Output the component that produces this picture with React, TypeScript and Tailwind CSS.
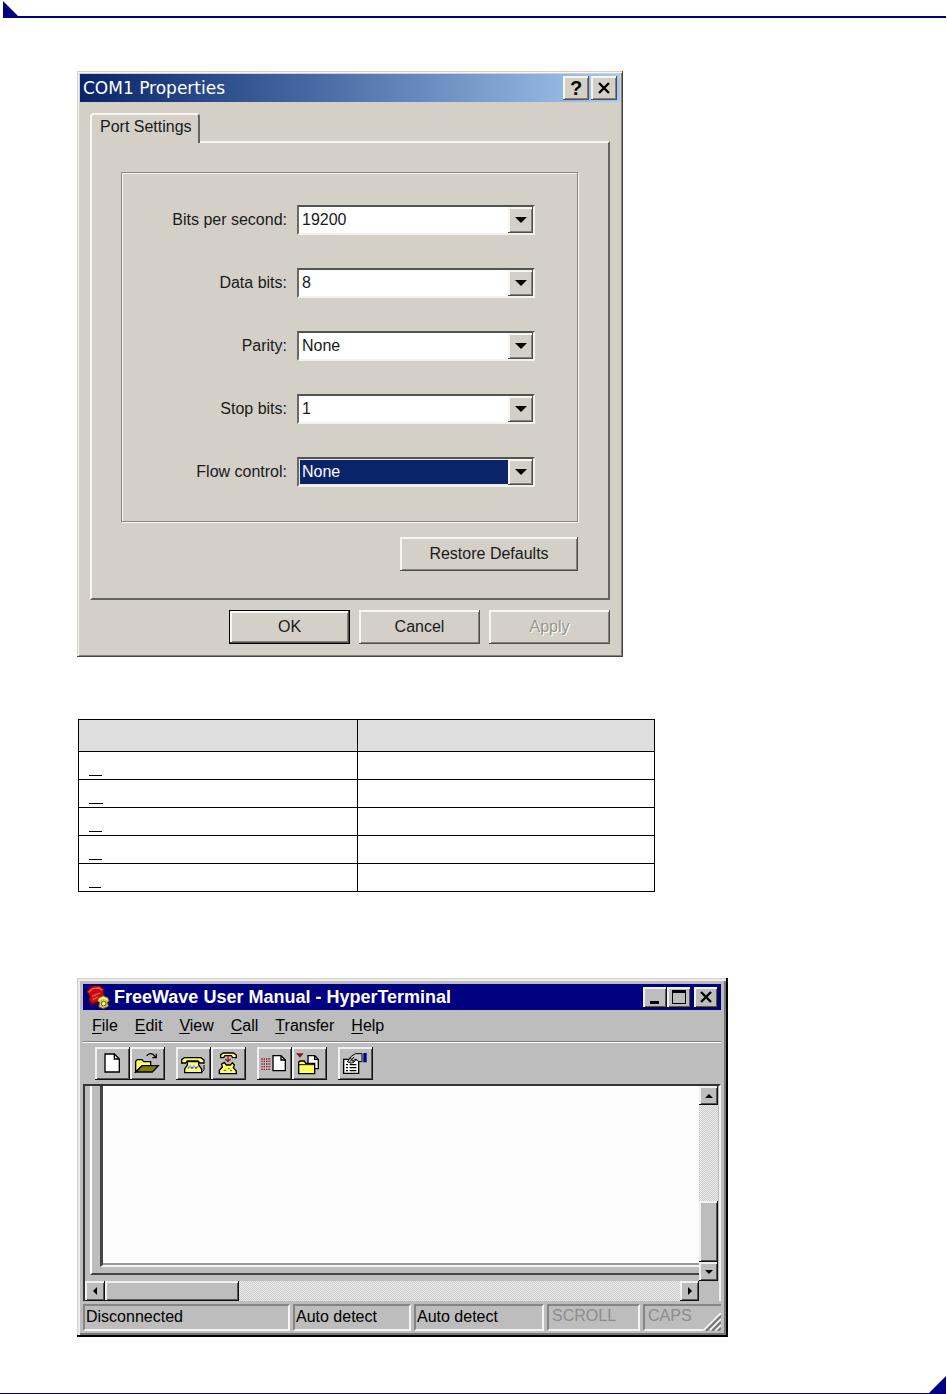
import { useState } from "react";
import type { ReactNode } from "react";
import clsx from "clsx";

const ports = [
  { id: "baud", label: "Bits per second:", value: "19200", options: ["9600", "19200", "38400", "115200"] },
  { id: "data", label: "Data bits:", value: "8", options: ["7", "8"] },
  { id: "parity", label: "Parity:", value: "None", options: ["None", "Even", "Odd"] },
  { id: "stop", label: "Stop bits:", value: "1", options: ["1", "2"] },
  { id: "flow", label: "Flow control:", value: "None", options: ["None", "Hardware", "Xon / Xoff"], active: true },
];

const blanks = ["w-[13px]", "w-[14px]", "w-[13px]", "w-[13px]", "w-3"];

const menus = ["File", "Edit", "View", "Call", "Transfer", "Help"];

// Raised edges: warm gray for the dialog, neutral gray for the terminal
const raised = "bg-[#d4d0c8] shadow-[inset_-1px_-1px_0_#504e4a,inset_2px_2px_0_#f8f6f2,inset_-2px_-2px_0_#858178]";
const raisedGray = "bg-[#bdbdbd] shadow-[inset_-1px_-1px_0_#111,inset_2px_2px_0_#f0f0f0,inset_-2px_-2px_0_#555]";
const dither = "bg-[repeating-conic-gradient(#ececec_0_25%,#cbcbcb_0_50%)] bg-[length:2px_2px]";

function Cross() {
  return (
    <svg viewBox="0 0 12 12" className="h-3 w-3" aria-hidden="true">
      <path d="M1 1 11 11M11 1 1 11" stroke="#000" strokeWidth="2.4" />
    </svg>
  );
}

function PortField({ field }: { field: (typeof ports)[number] }) {
  const [value, setValue] = useState(field.value);
  return (
    <div className="flex items-center justify-end gap-[10px]">
      <label htmlFor={field.id}>{field.label}</label>
      <div className="relative w-[238px]">
        <select
          id={field.id}
          value={value}
          onChange={(e) => setValue(e.target.value)}
          className={clsx(
            "block h-[30px] w-full appearance-none border-2 border-t-[#55534f] border-l-[#6b6963] border-r-[#f4f2ee] border-b-[#f4f2ee] pl-[3px] outline-none",
            field.active ? "bg-[#0a246a] text-white shadow-[inset_0_0_0_1px_#e8e6e0]" : "bg-white"
          )}
        >
          {field.options.map((o) => (
            <option key={o}>{o}</option>
          ))}
        </select>
        <span className={clsx("pointer-events-none absolute top-0.5 right-0.5 bottom-0.5 flex w-[25px] items-center justify-center", raised)}>
          <svg viewBox="0 0 12 6" className="h-1.5 w-3" aria-hidden="true">
            <path d="M0 0H12L6 6Z" />
          </svg>
        </span>
      </div>
    </div>
  );
}

function PropertiesDialog() {
  return (
    <section className="w-full max-w-[546px] bg-[#d4d0c8] p-[3px] pb-[13px] text-base leading-5 text-[#1a1a1a] shadow-[inset_-1px_-1px_0_#45433f,inset_1px_1px_0_#d4d0c8,inset_2px_2px_0_#f8f6f2,inset_-2px_-2px_0_#858178]">
      <header className="flex h-7 items-center bg-linear-to-r from-[#0a246a] to-[#a6caf0] pr-[3px] pl-[3px]">
        <h2 className="flex-1 font-['DejaVu_Sans',sans-serif] text-[17px] font-normal text-white">COM1 Properties</h2>
        <div className="flex gap-0.5">
          <button aria-label="Help" className={clsx("flex h-6 w-[26px] items-center justify-center text-xl font-bold text-black", raised)}>?</button>
          <button aria-label="Close" className={clsx("flex h-6 w-[26px] items-center justify-center", raised)}>
            <Cross />
          </button>
        </div>
      </header>

      <div className="px-[10px] pt-[11px]">
        <div role="tablist" className="flex">
          <button role="tab" aria-selected="true" className="-mb-0.5 h-[30px] rounded-t-sm border-t-2 border-r-2 border-l-2 border-t-[#f8f6f2] border-r-[#65635f] border-l-[#f8f6f2] bg-[#d4d0c8] pr-1.5 pb-1 pl-2">
            Port Settings
          </button>
        </div>
        <div className="border-2 border-t-[#f8f6f2] border-r-[#65635f] border-b-[#65635f] border-l-[#f8f6f2] pt-[29px] pr-[30px] pb-[27px] pl-[29px]">
          <fieldset className="flex flex-col gap-[33px] border border-[#8c8880] pt-8 pr-[42px] pb-[34px] shadow-[1px_1px_0_#f8f6f2,inset_1px_1px_0_#f8f6f2]">
            {ports.map((p) => (
              <PortField key={p.id} field={p} />
            ))}
          </fieldset>
          <div className="mt-[15px] flex justify-end">
            <button className={clsx("h-[34px] w-[178px]", raised)}>Restore Defaults</button>
          </div>
        </div>
        <div className="mt-[10px] flex justify-end gap-[9px]">
          <button className={clsx("h-[34px] w-[121px] border border-black", raised)}>OK</button>
          <button className={clsx("h-[34px] w-[121px]", raised)}>Cancel</button>
          <button disabled className={clsx("h-[34px] w-[121px] text-[#98958e] [text-shadow:1px_1px_0_#fff]", raised)}>Apply</button>
        </div>
      </div>
    </section>
  );
}

function SettingsTable() {
  return (
    <table className="mt-[62px] ml-px w-full max-w-[577px] table-fixed border-collapse">
      <thead>
        <tr className="h-8 bg-[#dedede]">
          <th className="w-[279px] border border-black p-0" />
          <th className="border border-black p-0" />
        </tr>
      </thead>
      <tbody>
        {blanks.map((width, i) => (
          <tr key={i} className="h-7">
            <td className="border border-black p-0 pl-[10px] align-top">
              <div className={clsx("h-6 border-b border-black", width)} />
            </td>
            <td className="border border-black p-0" />
          </tr>
        ))}
      </tbody>
    </table>
  );
}

function Tool({ label, children }: { label: string; children: ReactNode }) {
  return (
    <button aria-label={label} className={clsx("h-[33px] w-[35px]", raisedGray)}>
      <svg viewBox="0 0 105 99" className="block h-full w-full" stroke="#000" strokeWidth="4" fill="none">
        {children}
      </svg>
    </button>
  );
}

function Toolbar() {
  return (
    <div className="flex gap-[11px] px-3 py-1">
      <div className="flex">
        <Tool label="New">
          <path d="M30 21H58L73 36V75H30Z" fill="#fff" />
          <path d="M58 21V36H73" />
        </Tool>
        <Tool label="Open">
          <path d="M17 75V43L22 38H36L41 44H62V56H37Z" fill="#ffff66" />
          <path d="M17 75 37 56H85L67 75Z" fill="#808000" />
          <path d="M50 27Q54 20 62 20Q70 20 76 30M79 20V32H67" strokeWidth="3.5" />
        </Tool>
      </div>
      <div className="flex">
        <Tool label="Connect">
          <path d="M26 77V66L34 54V44H68V54L77 66V77Z" fill="#ffff66" />
          <path d="M17 46V38L25 32H75L84 39V48H72L66 42H34L29 48H17Z" fill="#ffff66" />
          <path d="M36 64 42 56 48 64 54 56 60 64 66 58" stroke="#4848e0" />
          <path d="M37 57H64M38 68H66" stroke="#fff" strokeWidth="3" />
          <path d="M77 76 84 69V54" strokeWidth="3" />
        </Tool>
        <Tool label="Disconnect">
          <path d="M29 31V23L37 18H67L76 24V32H65L61 26H42L38 32H29Z" fill="#ffff66" />
          <path d="M51 28V42M43 36 51 44 59 36" stroke="#9c1030" />
          <path d="M25 80V70L34 60 32 51 40 46 46 54H58L64 47 70 54 67 62 76 72V80Z" fill="#ffff66" />
          <path d="M38 70H46M50 65H56M57 71H63" stroke="#555" strokeWidth="3" />
        </Tool>
      </div>
      <div className="flex">
        <Tool label="Send">
          <path d="M13 36H42M13 43H42M13 51H42M13 59H42M13 67H42" stroke="#8c1020" strokeDasharray="4 3" />
          <path d="M48 26H72L85 39V71H48Z" fill="#fff" />
          <path d="M72 26V39H85" />
        </Tool>
        <Tool label="Receive">
          <path d="M12 19H35L24 32Z" fill="#8c1020" stroke="none" />
          <path d="M48 26H68L79 37V65H48Z" fill="#fff" />
          <path d="M68 26V37H79" />
          <path d="M20 80V46L24 42H37L41 49H68V80Z" fill="#ffff55" />
          <path d="M20 53H68" strokeWidth="3" />
        </Tool>
      </div>
      <Tool label="Properties">
        <path d="M17 37H62V79H17Z" fill="#fff" />
        <path d="M24 53H30M35 53H55M24 62H30M35 62H55M24 71H30M35 71H55" />
        <path d="M28 44 40 28 52 20H72V44H63L52 36 40 49Z" fill="#c8c8c8" strokeWidth="3" />
        <path d="M36 44 48 30M44 49 56 36M36 32 48 44" strokeWidth="3" />
        <path d="M76 18H86V46H76Z" fill="#000090" stroke="none" />
      </Tool>
    </div>
  );
}

function Phones() {
  return (
    <svg viewBox="0 0 72 72" className="h-6 w-6" aria-hidden="true">
      <path d="M2 20 16 4 40 2 54 12 52 26 60 38 38 52 16 58 8 46 12 34Z" fill="#c80c14" stroke="#400" strokeWidth="2" />
      <path d="M8 22 22 10 40 9 48 16M18 34 42 24M20 44 36 36" fill="none" stroke="#ff5a50" strokeWidth="4" />
      <path d="M10 48 18 58 36 52" fill="none" stroke="#600" strokeWidth="5" />
      <path d="M34 48 38 38 52 32 66 38 70 48 64 52 68 64 52 71 38 66 40 52Z" fill="#d8c848" stroke="#504000" strokeWidth="2" />
      <circle cx="53" cy="56" r="7" fill="#f0f0c8" stroke="#605820" strokeWidth="3" />
      <path d="M40 44 52 38 64 44" fill="none" stroke="#ffff9c" strokeWidth="4" />
    </svg>
  );
}

function ScrollButton({ label, d, className }: { label: string; d: string; className: string }) {
  return (
    <button aria-label={label} className={clsx("flex shrink-0 items-center justify-center", raisedGray, className)}>
      <svg viewBox="0 0 8 8" className="h-2 w-2" aria-hidden="true">
        <path d={d} />
      </svg>
    </button>
  );
}

function StatusPanel({ className, children }: { className: string; children: ReactNode }) {
  return (
    <div className={clsx("border-2 border-t-[#858585] border-r-[#f4f4f4] border-b-[#f4f4f4] border-l-[#858585] whitespace-nowrap", className)}>
      {children}
    </div>
  );
}

function TerminalWindow() {
  return (
    <section className="mt-[86px] w-full max-w-[651px] bg-[#bdbdbd] pt-1.5 pr-[7px] pb-1.5 pl-1.5 text-base leading-[22px] text-black shadow-[inset_-2px_-2px_0_#000,inset_1px_1px_0_#d0d0d0,inset_3px_3px_0_#ececec,inset_-4px_-4px_0_#777]">
      <header className="flex h-[26px] items-center bg-[#000080] pr-[3px] pl-[3px] text-white">
        <Phones />
        <h2 className="ml-1 flex-1 text-lg leading-6 font-bold">FreeWave User Manual - HyperTerminal</h2>
        <button aria-label="Minimize" className={clsx("flex h-[21px] w-6 items-end justify-center pb-1", raisedGray)}>
          <span className="mr-0.5 h-[3px] w-[9px] bg-black" />
        </button>
        <button aria-label="Maximize" className={clsx("flex h-[21px] w-6 items-center justify-center", raisedGray)}>
          <span className="h-[14px] w-[14px] border border-t-[3px] border-black" />
        </button>
        <button aria-label="Close" className={clsx("ml-[3px] flex h-[21px] w-6 items-center justify-center", raisedGray)}>
          <Cross />
        </button>
      </header>

      <nav className="flex h-[33px] items-center gap-[17px] border-b border-white pl-[9px] shadow-[inset_0_-1px_0_#808080]">
        {menus.map((m) => (
          <button key={m}>
            <span className="underline underline-offset-2">{m[0]}</span>
            {m.slice(1)}
          </button>
        ))}
      </nav>

      <Toolbar />

      <div className="border-t-2 border-r-2 border-l-2 border-t-[#333] border-r-[#f0f0f0] border-l-[#333]">
        <div className="flex">
          <div className="h-[195px] min-w-0 flex-1 pb-1.5 pl-[5px]">
            <div className="h-full border-b-2 border-l-2 border-b-[#444] border-l-white pb-1.5 pl-2">
              <textarea
                aria-label="Terminal"
                readOnly
                className="block h-full w-full resize-none border-b-2 border-l-[3px] border-b-[#f4f4f4] border-l-[#444] bg-[#fdfdfd] shadow-[inset_0_-2px_0_#999] outline-none"
              />
            </div>
          </div>
          <div className={clsx("mr-px flex w-[19px] flex-col", dither)}>
            <ScrollButton label="Scroll up" d="M4 2 8 6H0Z" className="h-[19px]" />
            <div className="flex-1" />
            <div className={clsx("h-[61px]", raisedGray)} />
            <ScrollButton label="Scroll down" d="M4 6 0 2H8Z" className="h-[19px]" />
          </div>
        </div>
        <div className={clsx("mr-5 flex h-5", dither)}>
          <ScrollButton label="Scroll left" d="M2 4 6 0V8Z" className="w-5" />
          <div className={clsx("w-[134px]", raisedGray)} />
          <div className="flex-1" />
          <ScrollButton label="Scroll right" d="M6 4 2 0V8Z" className="w-[19px]" />
        </div>
      </div>

      <footer className="relative mt-[3px] flex h-[27px] gap-[3px]">
        <StatusPanel className="w-[207px] pl-px">Disconnected</StatusPanel>
        <StatusPanel className="w-[118px] pl-px">Auto detect</StatusPanel>
        <StatusPanel className="w-[130px] pl-px">Auto detect</StatusPanel>
        <StatusPanel className="w-[93px] pl-[3px] leading-5 text-[#8c8c8c]">SCROLL</StatusPanel>
        <StatusPanel className="flex-1 border-r-0 pl-[3px] leading-5 text-[#8c8c8c]">CAPS</StatusPanel>
        <svg viewBox="0 0 18 18" className="absolute right-0 bottom-0 h-[18px] w-[18px]" aria-hidden="true">
          <path d="M0 18 18 0V18Z" fill="#bdbdbd" />
          <path d="M1 17 18 0M7 17 18 6M13 17 18 12" stroke="#fff" strokeWidth="1.5" />
          <path d="M3 18 18 3M9 18 18 9M15 18 18 15" stroke="#777" strokeWidth="2" />
        </svg>
      </footer>
    </section>
  );
}

export default function App() {
  return (
    <div className="bg-white font-['Liberation_Sans',Arial,sans-serif]">
      <div className="mr-px ml-[3px] border-b-2 border-[#000080] pt-px">
        <svg viewBox="0 0 15 15" className="block h-[15px] w-[15px]" aria-hidden="true">
          <path d="M0 0 15 15H0Z" fill="#000080" />
        </svg>
      </div>

      <main className="pt-[53px] pr-5 pl-[77px]">
        <PropertiesDialog />
        <SettingsTable />
        <TerminalWindow />
      </main>

      <div className="mt-[39px] mr-px flex justify-end border-b border-[#000080]">
        <svg viewBox="0 0 17 17" className="block h-[17px] w-[17px]" aria-hidden="true">
          <path d="M17 0V17H0Z" fill="#000080" />
        </svg>
      </div>
    </div>
  );
}
